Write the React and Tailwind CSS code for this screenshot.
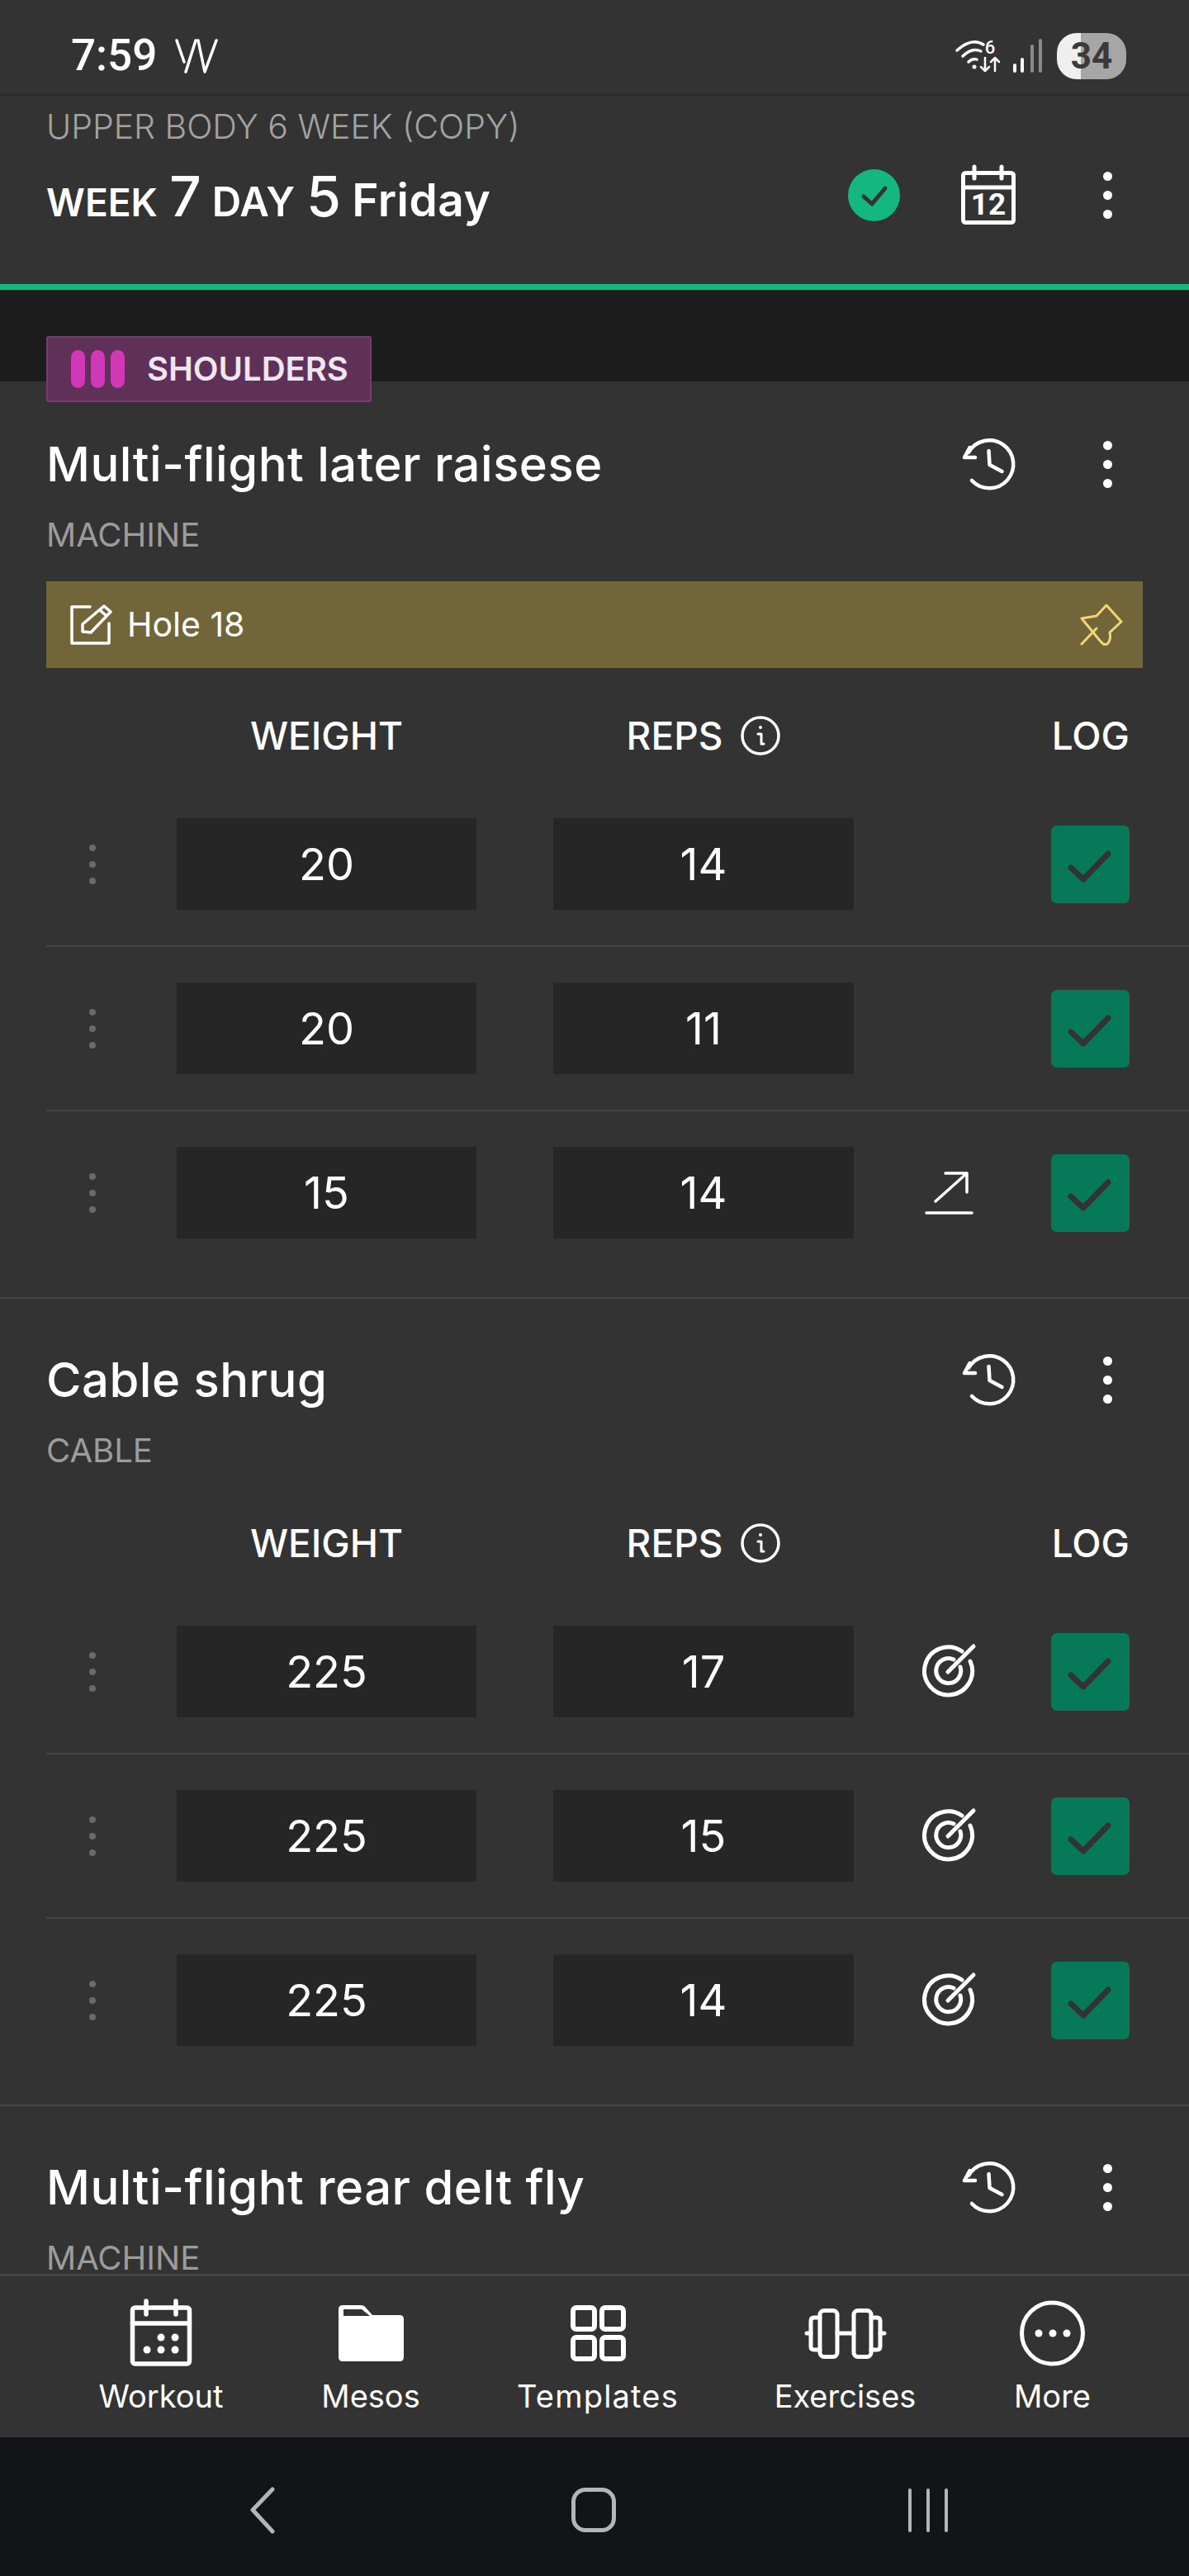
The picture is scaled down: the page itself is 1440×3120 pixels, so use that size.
const Icon = ({ w, h, className = "", children, fill = "none", stroke = "#fff", sw = 5 }) => (
  <svg
    width={w}
    height={h}
    viewBox={`0 0 ${w} ${h}`}
    fill={fill}
    stroke={stroke}
    strokeWidth={sw}
    strokeLinecap="round"
    strokeLinejoin="round"
    className={`shrink-0 overflow-visible ${className}`}
  >
    {children}
  </svg>
);

const Dots = ({ color = "bg-white", size = "w-[11px] h-[11px]", gap = "gap-[12px]" }) => (
  <div className={`flex flex-col items-center ${gap}`}>
    <span className={`rounded-full ${size} ${color}`} />
    <span className={`rounded-full ${size} ${color}`} />
    <span className={`rounded-full ${size} ${color}`} />
  </div>
);

const HistoryIcon = () => (
  <Icon w={66} h={63} sw={4.5}>
    <path d="M9 17A29 29 0 1 1 13 51" />
    <path d="M4 23L10.5 11M4 23H17" />
    <path d="M33.5 15L34.5 32L49.5 40" />
  </Icon>
);

const InfoIcon = () => (
  <Icon w={48} h={48} sw={3.5}>
    <circle cx="24" cy="24" r="22" />
    <path d="M21 22H25V34H28" strokeWidth="3" />
    <circle cx="24" cy="14" r="2" fill="#fff" stroke="none" />
  </Icon>
);

const TargetIcon = () => (
  <Icon w={63} h={63} sw={5}>
    <path d="M47 7A29 29 0 1 0 57 19" />
    <path d="M37 17A15 15 0 1 0 45 26" />
    <path d="M30 32L61 1" />
  </Icon>
);

const UpArrowIcon = () => (
  <Icon w={57} h={53} sw={3.5}>
    <path d="M12 37L50 3M24 3H50V26" />
    <path d="M1 51H56" />
  </Icon>
);

const EditIcon = () => (
  <Icon w={49} h={49} sw={3.5}>
    <path d="M24 3H2V47H47V23" />
    <path d="M15 33V24L41 2L49 9L25 34Z" />
    <path d="M36 7L44 14" />
  </Icon>
);

const PinIcon = () => (
  <Icon w={50} h={51} sw={3} stroke="#f2d676">
    <path d="M1 18L19 15L31 2L49 22L35 35Q37 44 32 49Q28 51 24 46Z" />
    <path d="M1 49L19 30" />
  </Icon>
);

const SetRow = ({ weight, reps, mark, last }) => (
  <div className={`ml-[56px] pr-[72px] flex items-center pt-[43px] ${last ? "pb-[71px]" : "pb-[43px] border-b-2 border-[#464646]"}`}>
    <div className="w-[112px] flex justify-center">
      <Dots color="bg-[#6a6a6a]" size="w-[8px] h-[8px]" gap="gap-[12px]" />
    </div>
    <div className="ml-[46px] w-[363px] h-[111px] bg-[#262626] flex items-center justify-center text-[54px] text-white">{weight}</div>
    <div className="ml-[93px] w-[364px] h-[111px] bg-[#262626] flex items-center justify-center text-[54px] text-white">{reps}</div>
    <div className="ml-[84px] w-[63px] flex justify-center">
      {mark === "target" && <TargetIcon />}
      {mark === "up" && <UpArrowIcon />}
    </div>
    <div className="ml-auto w-[95px] h-[94px] rounded-[7px] bg-[#067a58] flex items-center justify-center">
      <Icon w={95} h={94} stroke="#333" sw={7}>
        <path d="M24 51L39 65L69 34" />
      </Icon>
    </div>
  </div>
);

const ColumnHeads = ({ top = "mt-[57px]" }) => (
  <div className={`${top} ml-[56px] pr-[72px] h-[50px] flex items-center text-[46px] font-medium text-white`}>
    <div className="ml-[158px] w-[363px] text-center">WEIGHT</div>
    <div className="ml-[93px] w-[364px] flex items-center justify-center gap-[22px]">
      <span>REPS</span>
      <InfoIcon />
    </div>
    <div className="ml-auto w-[95px] text-right whitespace-nowrap">LOG</div>
  </div>
);

const Exercise = ({ name, kind, top = "mt-[62px]", children }) => (
  <>
    <div className={`${top} h-[72px] pl-[56px] pr-[93px] flex items-center`}>
      <div className="text-[58px] font-medium text-white tracking-[0.5px] whitespace-nowrap">{name}</div>
      <div className="ml-auto mr-[106px]">
        <HistoryIcon />
      </div>
      <Dots />
    </div>
    <div className="mt-[25px] h-[50px] pl-[56px] flex items-center text-[40px] text-[#9c9c9c]">{kind}</div>
    {children}
  </>
);

const NavItem = ({ label, width, track = "", children }) => (
  <div className={`flex flex-col items-center ${width}`}>
    <div className="h-[84px] flex items-center justify-center">{children}</div>
    <div className={`mt-[11px] h-[46px] flex items-center text-[38px] text-white whitespace-nowrap ${track}`}>{label}</div>
  </div>
);

export default function App() {
  return (
    <div className="w-[1440px] h-[3120px] flex flex-col overflow-hidden bg-[#333333] font-['Inter',sans-serif]">
      {/* status bar */}
      <div className="h-[117px] shrink-0 border-b-4 border-[#2a2c2d] flex items-center pl-[86px] pr-[76px] pt-[22px]">
        <span className="font-['Roboto',sans-serif] font-medium text-[53px] text-white leading-none">7:59</span>
        <Icon w={51} h={39} sw={3.5} className="ml-[22px]">
          <path d="M2 1L11 27M13 39L25 1M28 1L36 39L50 1" />
        </Icon>
        <div className="ml-auto flex items-center">
          <Icon w={56} h={40} sw={3.5}>
            <path d="M1 13Q19 -3 33 6M8 20Q19 9 30 14M15 27Q20 22 25 24" />
            <circle cx="22" cy="33" r="2.5" fill="#fff" stroke="none" />
            <text x="41" y="17" fontSize="22" fontWeight="500" fill="#fff" stroke="none" textAnchor="middle" fontFamily="Roboto">6</text>
            <path d="M35 22V38M30 33L35 38L40 33" strokeWidth="2.5" />
            <path d="M47 38V22M42 27L47 22L52 27" strokeWidth="2.5" />
          </Icon>
          <Icon w={38} h={40} sw={4} className="ml-[12px]">
            <path d="M3 38V31M12 38V24" />
            <path d="M24 38V8M34 38V1" stroke="#8a8a8a" />
          </Icon>
          <div className="ml-[16px] w-[84px] h-[56px] rounded-[24px] bg-[linear-gradient(90deg,#efefef_35%,#a6a6a6_35%)] flex items-center justify-center text-[#3a3a3a] font-['Roboto',sans-serif] font-bold text-[44px] leading-none">
            34
          </div>
        </div>
      </div>

      {/* workout header */}
      <div className="h-[227px] shrink-0 pl-[56px] pr-[93px] flex">
        <div className="flex-1">
          <div className="mt-[13px] h-[48px] flex items-center text-[41px] font-light text-[#a3a3a3] whitespace-nowrap">UPPER BODY 6 WEEK (COPY)</div>
          <div className="mt-[24px] flex items-baseline text-white font-semibold text-[49px] leading-[70px] whitespace-nowrap">
            <span className="text-[46px]">WEEK</span>
            <span className="ml-[14px] text-[68px] font-medium">7</span>
            <span className="ml-[13px]">DAY</span>
            <span className="ml-[14px] text-[68px] font-medium">5</span>
            <span className="ml-[13px] text-[55px] tracking-[0.5px]">Friday</span>
          </div>
        </div>
        <div className="mt-[84px] h-[71px] flex items-center">
          <div className="w-[63px] h-[63px] rounded-full bg-[#14b77f]">
            <Icon w={63} h={63} stroke="#333" sw={5}>
              <path d="M19 33L29 42L45 23" />
            </Icon>
          </div>
          <Icon w={66} h={71} sw={5} className="ml-[74px]">
            <rect x="2.5" y="8.5" width="61" height="60" rx="3" />
            <path d="M2.5 26H63.5M16 1V15M49 1V15" />
            <text x="33" y="59" fontSize="37" fontWeight="700" fill="#fff" stroke="none" textAnchor="middle" fontFamily="Roboto">12</text>
          </Icon>
          <div className="ml-[106px]">
            <Dots />
          </div>
        </div>
      </div>
      <div className="h-[7px] shrink-0 bg-[#14b77f]" />

      {/* exercises, cut off by the nav */}
      <div className="flex-1 min-h-0 overflow-hidden">
        <div className="h-[111px] bg-[#1c1c1c]" />
        <div className="relative -mt-[55px] ml-[56px] w-[394px] h-[80px] rounded-[3px] bg-[#5f3159] border-2 border-[#7c3a73] flex items-center pl-[28px]">
          <div className="flex gap-[7px]">
            <span className="w-[17px] h-[46px] rounded-full bg-[#d038b5]" />
            <span className="w-[17px] h-[46px] rounded-full bg-[#d038b5]" />
            <span className="w-[17px] h-[46px] rounded-full bg-[#d038b5]" />
          </div>
          <span className="ml-[27px] text-[40px] font-semibold text-[#efe6ef]">SHOULDERS</span>
        </div>

        <Exercise name="Multi-flight later raisese" kind="MACHINE" top="mt-[39px]">
          <div className="mt-[31px] mx-[56px] h-[105px] bg-[#716539] flex items-center pl-[29px] pr-[25px]">
            <EditIcon />
            <span className="ml-[20px] text-[41px] text-white">Hole 18</span>
            <div className="ml-auto">
              <PinIcon />
            </div>
          </div>
          <ColumnHeads />
          <div className="mt-[32px] border-b-2 border-[#464646]">
            <SetRow weight="20" reps="14" />
            <SetRow weight="20" reps="11" />
            <SetRow weight="15" reps="14" mark="up" last />
          </div>
        </Exercise>

        <Exercise name="Cable shrug" kind="CABLE">
          <ColumnHeads top="mt-[62px]" />
          <div className="mt-[32px] border-b-2 border-[#464646]">
            <SetRow weight="225" reps="17" mark="target" />
            <SetRow weight="225" reps="15" mark="target" />
            <SetRow weight="225" reps="14" mark="target" last />
          </div>
        </Exercise>

        <Exercise name="Multi-flight rear delt fly" kind="MACHINE" />
      </div>

      {/* bottom nav */}
      <div className="h-[198px] shrink-0 border-t-[3px] border-[#454545] pt-[27px] pr-[2px] flex justify-center gap-[120px]">
        <NavItem label="Workout" width="w-[153px]">
          <Icon w={74} h={80} sw={5.5}>
            <rect x="2.5" y="9" width="69" height="68" rx="3" />
            <path d="M2.5 28H71.5M19 1V17M55 1V17" />
            <g fill="#fff" stroke="none">
              <circle cx="37" cy="45" r="4.5" />
              <circle cx="54" cy="45" r="4.5" />
              <circle cx="20" cy="60" r="4.5" />
              <circle cx="37" cy="60" r="4.5" />
              <circle cx="54" cy="60" r="4.5" />
            </g>
          </Icon>
        </NavItem>
        <NavItem label="Mesos" width="w-[115px]">
          <Icon w={79} h={68} sw={0} fill="#fff" stroke="none">
            <path d="M5 0H27Q31 0 33 3L41 12H74Q79 12 79 17V63Q79 68 74 68H5Q0 68 0 63V5Q0 0 5 0Z" />
            <path d="M6 5H28L38 13H6Z" fill="#333" />
          </Icon>
        </NavItem>
        <NavItem label="Templates" width="w-[195px]" track="tracking-[1.2px]">
          <Icon w={67} h={68} sw={6}>
            <rect x="3" y="3" width="26" height="26" rx="4" />
            <rect x="38" y="3" width="26" height="26" rx="4" />
            <rect x="3" y="39" width="26" height="26" rx="4" />
            <rect x="38" y="39" width="26" height="26" rx="4" />
          </Icon>
        </NavItem>
        <NavItem label="Exercises" width="w-[164px]">
          <Icon w={98} h={61} sw={5}>
            <rect x="18" y="2.5" width="21" height="56" rx="5" />
            <rect x="59" y="2.5" width="21" height="56" rx="5" />
            <path d="M18 11H11Q7 11 7 15V46Q7 50 11 50H18M80 11H87Q91 11 91 15V46Q91 50 87 50H80" />
            <path d="M39 30H59M2 30H7M91 30H96" />
          </Icon>
        </NavItem>
        <NavItem label="More" width="w-[90px] ml-[4px]">
          <Icon w={79} h={80} sw={5}>
            <circle cx="39.5" cy="40" r="37" />
            <g fill="#fff" stroke="none">
              <circle cx="23" cy="40" r="4.5" />
              <circle cx="40" cy="40" r="4.5" />
              <circle cx="57" cy="40" r="4.5" />
            </g>
          </Icon>
        </NavItem>
      </div>

      {/* android buttons */}
      <div className="h-[168px] shrink-0 bg-[#131417] flex items-center pl-[303px] pt-[8px]">
        <Icon w={30} h={55} sw={5} stroke="#b3b5b7">
          <path d="M27 2L3 27L27 53" />
        </Icon>
        <div className="ml-[359px] w-[54px] h-[54px] rounded-[17px] border-[5px] border-[#b3b5b7]" />
        <div className="ml-[354px] flex gap-[18px]">
          <span className="w-[4px] h-[53px] rounded-full bg-[#b3b5b7]" />
          <span className="w-[4px] h-[53px] rounded-full bg-[#b3b5b7]" />
          <span className="w-[4px] h-[53px] rounded-full bg-[#b3b5b7]" />
        </div>
      </div>
    </div>
  );
}
